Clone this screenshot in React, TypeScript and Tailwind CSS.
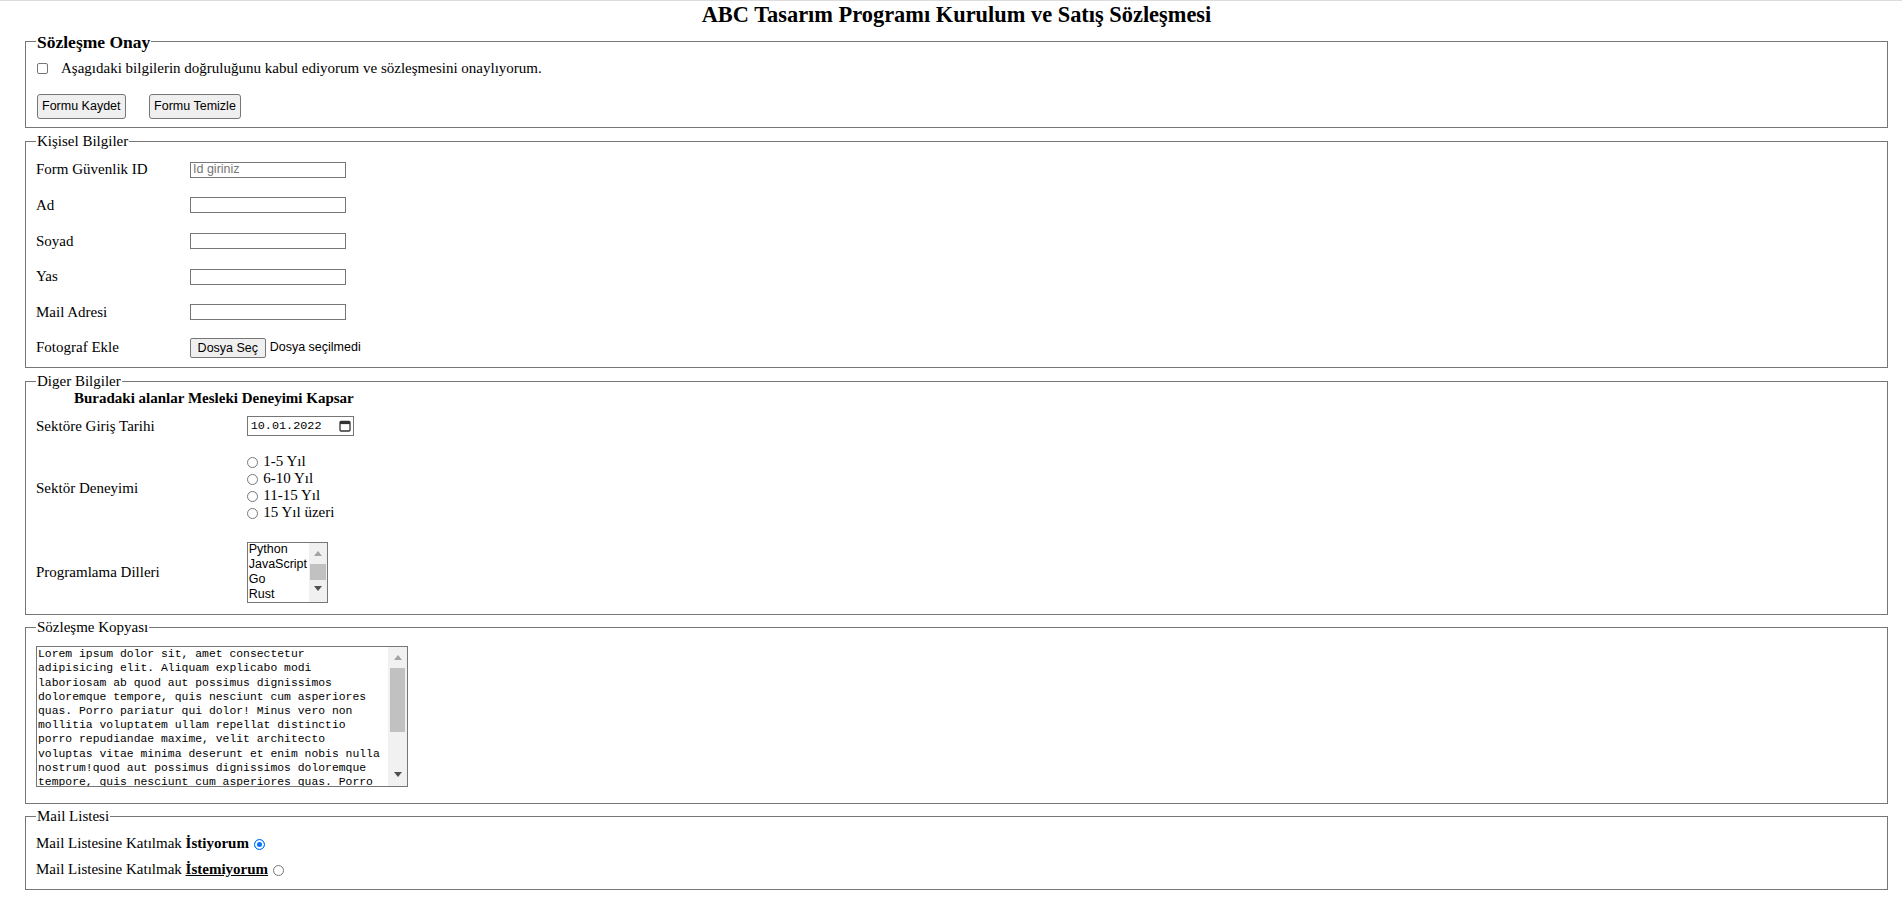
import React from 'react';

const lorem = [
  'Lorem ipsum dolor sit, amet consectetur',
  'adipisicing elit. Aliquam explicabo modi',
  'laboriosam ab quod aut possimus dignissimos',
  'doloremque tempore, quis nesciunt cum asperiores',
  'quas. Porro pariatur qui dolor! Minus vero non',
  'mollitia voluptatem ullam repellat distinctio',
  'porro repudiandae maxime, velit architecto',
  'voluptas vitae minima deserunt et enim nobis nulla',
  'nostrum!quod aut possimus dignissimos doloremque',
  'tempore, quis nesciunt cum asperiores quas. Porro',
  'pariatur qui dolor! Minus vero non mollitia',
  'voluptatem ullam repellat distinctio porro',
  'repudiandae maxime, velit architecto voluptas',
  'vitae minima deserunt et enim nobis nulla nostrum!',
].join('\n');

const UpArrow = ({ color }: { color: string }) => (
  <svg width="8" height="5" viewBox="0 0 8 5">
    <polygon points="0,5 8,5 4,0" fill={color} />
  </svg>
);

const DownArrow = ({ color }: { color: string }) => (
  <svg width="8" height="5" viewBox="0 0 8 5">
    <polygon points="0,0 8,0 4,5" fill={color} />
  </svg>
);

const CalendarIcon = () => (
  <svg width="12" height="12" viewBox="0 0 12 12">
    <rect x="1" y="1.5" width="10" height="9.5" rx="1" fill="none" stroke="#333" strokeWidth="1.3" />
    <rect x="1" y="1.5" width="10" height="2.6" fill="#333" />
  </svg>
);

const textInput =
  "w-[156px] h-[16px] border border-[#767676] px-[2px] text-[12.5px] font-['Liberation_Sans',sans-serif] placeholder:text-[#757575] outline-none";

const radio =
  'appearance-none inline-block align-middle w-[11px] h-[11px] rounded-full border border-[#767676] bg-white checked:bg-[#0075ff] checked:border-[#0075ff] checked:shadow-[inset_0_0_0_2px_#fff]';

export default function App() {
  return (
    <div className="min-h-screen bg-white border-t border-[#dcdcdc] font-['Liberation_Serif',serif] text-[15px] leading-[17px] text-black">
      <div className="pl-[25px] pr-[14px]">
        <h2 className="text-center font-bold text-[22.4px] leading-[27px] h-[30.7px]">
          ABC Tasarım Programı Kurulum ve Satış Sözleşmesi
        </h2>

        {/* Sözleşme onay */}
        <fieldset className="border border-[#767676] px-[10px] pb-[8.5px]">
          <legend className="px-px text-[17.5px] leading-[20px] font-bold">Sözleşme Onay</legend>
          <label className="block mt-[8px] h-[17px]">
            <input
              type="checkbox"
              className="appearance-none inline-block align-[-1px] ml-px mr-[13px] w-[11px] h-[11px] border border-[#767676] rounded-[2px] bg-white"
            />
            Aşagıdaki bilgilerin doğruluğunu kabul ediyorum ve sözleşmesini onaylıyorum.
          </label>
          <div className="mt-[17.5px] ml-px flex gap-[23.6px]">
            <button className="h-[24.4px] px-[4px] bg-[#efefef] border border-[#767676] rounded-[3px] text-[12.5px] leading-none font-['Liberation_Sans',sans-serif]">
              Formu Kaydet
            </button>
            <button className="h-[24.4px] px-[4px] bg-[#efefef] border border-[#767676] rounded-[3px] text-[12.5px] leading-none font-['Liberation_Sans',sans-serif]">
              Formu Temizle
            </button>
          </div>
        </fieldset>

        {/* Kişisel bilgiler */}
        <fieldset className="mt-[4.5px] border border-[#767676] px-[10px] pb-px">
          <legend className="px-px">Kişisel Bilgiler</legend>
          <div className="mt-[2.5px] grid grid-cols-[154px_1fr] auto-rows-[35.6px] items-center">
            <span>Form Güvenlik ID</span>
            <input className={textInput} placeholder="Id giriniz" />
            <span>Ad</span>
            <input className={textInput} />
            <span>Soyad</span>
            <input className={textInput} />
            <span>Yas</span>
            <input className={textInput} />
            <span>Mail Adresi</span>
            <input className={textInput} />
            <span>Fotograf Ekle</span>
            <div className="flex items-center font-['Liberation_Sans',sans-serif] text-[12.5px]">
              <button className="h-[19.4px] w-[75.7px] bg-[#efefef] border border-[#767676] rounded-[2px] leading-none">
                Dosya Seç
              </button>
              <span className="ml-[4px]">Dosya seçilmedi</span>
            </div>
          </div>
        </fieldset>

        {/* Diger bilgiler */}
        <fieldset className="mt-[5px] border border-[#767676] px-[10px] pb-[11.5px]">
          <legend className="px-px">Diger Bilgiler</legend>
          <div className="ml-[38px] font-bold">Buradaki alanlar Mesleki Deneyimi Kapsar</div>

          <div className="mt-[9.8px] flex items-center">
            <div className="w-[210.7px]">Sektöre Giriş Tarihi</div>
            <div className="flex items-center justify-between w-[107.6px] h-[19.7px] border border-[#767676] pl-[3px] pr-[2px] font-['Liberation_Mono',monospace] text-[11.8px]">
              <span>10.01.2022</span>
              <CalendarIcon />
            </div>
          </div>

          <div className="mt-[16.5px] flex items-center">
            <div className="w-[210.7px] pt-[3px]">Sektör Deneyimi</div>
            <div className="flex flex-col">
              {['1-5 Yıl', '6-10 Yıl', '11-15 Yıl', '15 Yıl üzeri'].map((t) => (
                <label key={t} className="block h-[17px]">
                  <input type="radio" name="deneyim" className={`${radio} align-[-1px] mr-[5.6px]`} />
                  {t}
                </label>
              ))}
            </div>
          </div>

          <div className="mt-[21.5px] flex items-center">
            <div className="w-[210.7px] pt-px">Programlama Dilleri</div>
            <div className="flex w-[81px] h-[60.6px] border border-[#767676] font-['Liberation_Sans',sans-serif] text-[12.5px] leading-[15px]">
              <div className="flex-1 pl-[1px] -mt-[1px] overflow-hidden">
                <div>Python</div>
                <div>JavaScript</div>
                <div>Go</div>
                <div>Rust</div>
              </div>
              <div className="w-[17.7px] bg-[#f0f0f0] flex flex-col">
                <div className="h-[20.6px] flex items-center justify-center">
                  <UpArrow color="#a3a3a3" />
                </div>
                <div className="h-[16.7px] mx-[1px] bg-[#c1c1c1]" />
                <div className="flex-1 flex justify-center pt-[6px]">
                  <DownArrow color="#505050" />
                </div>
              </div>
            </div>
          </div>
        </fieldset>

        {/* Sözleşme kopyası */}
        <fieldset className="mt-[3.5px] border border-[#767676] px-[10px] pb-[16.5px]">
          <legend className="px-px">Sözleşme Kopyası</legend>
          <div className="mt-[10.5px] flex w-[372.3px] h-[140.6px] border border-[#767676]">
            <textarea
              readOnly
              className="flex-1 resize-none overflow-hidden px-[1px] pt-0 font-['Liberation_Mono',monospace] text-[11.4px] leading-[14.2px] outline-none"
              defaultValue={lorem}
            />
            <div className="w-[19px] bg-[#f1f1f1] flex flex-col">
              <div className="h-[20.6px] flex items-center justify-center">
                <UpArrow color="#a3a3a3" />
              </div>
              <div className="h-[64.4px] mx-[2px] bg-[#c1c1c1]" />
              <div className="flex-1 flex justify-center items-end pb-[9px]">
                <DownArrow color="#505050" />
              </div>
            </div>
          </div>
        </fieldset>

        {/* Mail listesi */}
        <fieldset className="mt-[4px] border border-[#767676] px-[10px] pb-[10.8px]">
          <legend className="px-px">Mail Listesi</legend>
          <label className="block mt-[9.7px] h-[17px]">
            Mail Listesine Katılmak <b>İstiyorum</b>{' '}
            <input type="radio" name="mail" defaultChecked className={`${radio} align-[-1px] ml-px`} />
          </label>
          <label className="block mt-[8.8px] h-[17px]">
            Mail Listesine Katılmak <b className="underline">İstemiyorum</b>{' '}
            <input type="radio" name="mail" className={`${radio} align-[-1px] ml-px`} />
          </label>
        </fieldset>
      </div>
    </div>
  );
}
